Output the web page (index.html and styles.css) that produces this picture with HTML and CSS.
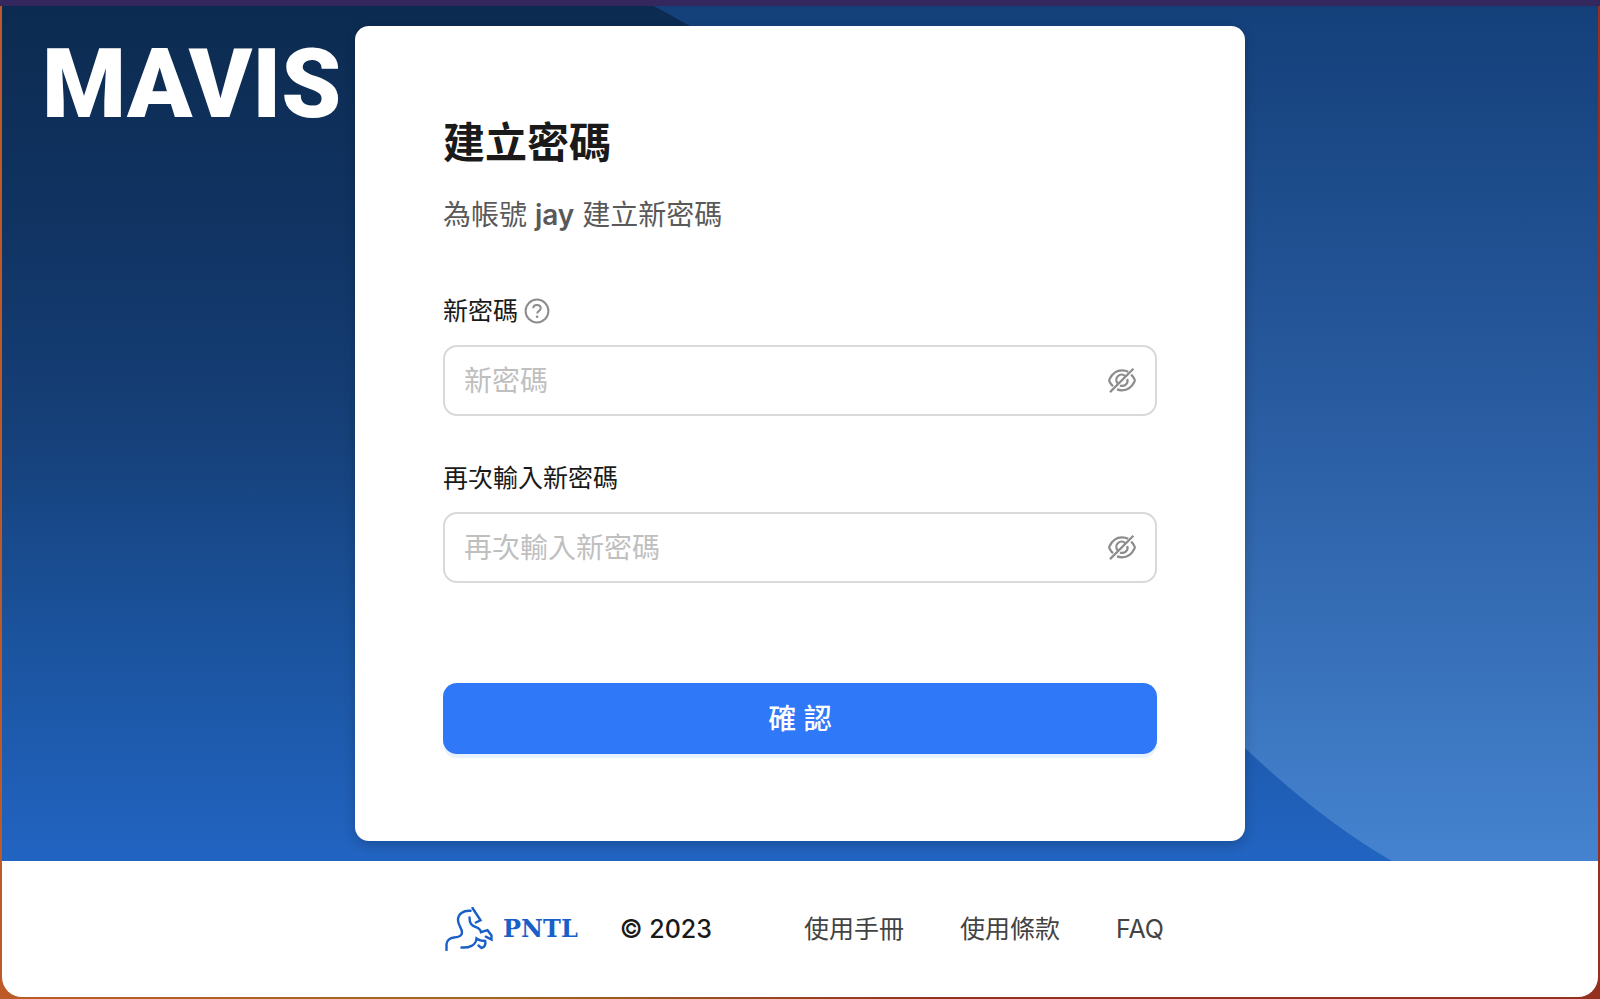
FILE: index.html
```html
<!DOCTYPE html>
<html lang="zh-Hant">
<head>
  <meta charset="UTF-8">
  <meta name="viewport" content="width=device-width, initial-scale=1.0">
  <title>建立密碼</title>
  <link rel="stylesheet" href="styles.css">
</head>
<body>
  <div class="window">
    <main class="hero">
      <svg class="hero-shape" viewBox="0 0 1596 855" preserveAspectRatio="none" aria-hidden="true">
        <defs>
          <linearGradient id="shape-fill" x1="0" y1="0" x2="0" y2="1">
            <stop offset="0" stop-color="#14407a"/>
            <stop offset="0.45" stop-color="#285a9f"/>
            <stop offset="0.8" stop-color="#3a74bd"/>
            <stop offset="1" stop-color="#4583d0"/>
          </linearGradient>
        </defs>
        <path fill="url(#shape-fill)" d="M652 0 L688 20 C960 170 960 470 1243 742 Q1320 815 1390 855 H1596 V0 Z"/>
      </svg>

      <a class="logo" href="#">MAVIS</a>

      <form class="card">
        <h1 class="title">建立密碼</h1>
        <p class="subtitle">為帳號 <strong>jay</strong> 建立新密碼</p>

        <div class="field">
          <div class="label-row">
            <label for="password">新密碼</label>
            <svg class="help" viewBox="0 0 26 26" aria-hidden="true">
              <circle cx="13" cy="13" r="11.4"/>
              <path d="M9.3 10.3c0-2 1.6-3.3 3.7-3.3s3.7 1.3 3.7 3.2c0 2.7-3.5 2.7-3.5 5.4"/>
              <circle class="dot" cx="13.1" cy="18.8" r="1.3"/>
            </svg>
          </div>
          <div class="input-box">
            <input type="password" id="password" placeholder="新密碼">
            <button type="button" class="toggle" aria-label="顯示密碼">
              <svg viewBox="0 0 28 28" aria-hidden="true">
                <path d="M20.200 4.800C18.300 3.800 16.300 3.400 14 3.400C8.500 3.400 4 7 1.500 12.300a2.400 2.400 0 0 0 0 2.200c.9 1.900 2.100 3.500 3.500 4.800M9 22.400C10.600 23 12.200 23.300 14 23.300c5.500 0 10-3.500 12.500-8.800a2.400 2.400 0 0 0 0-2.200c-.9-1.900-2-3.400-3.300-4.700"/>
                <path d="M17.200 9A5.300 5.300 0 0 0 9.400 16.100M12 18.400A5.300 5.300 0 0 0 19.300 12M2 25.100L25.400 1.700"/>
              </svg>
            </button>
          </div>
        </div>

        <div class="field">
          <div class="label-row">
            <label for="confirm">再次輸入新密碼</label>
          </div>
          <div class="input-box">
            <input type="password" id="confirm" placeholder="再次輸入新密碼">
            <button type="button" class="toggle" aria-label="顯示密碼">
              <svg viewBox="0 0 28 28" aria-hidden="true">
                <path d="M20.200 4.800C18.300 3.800 16.300 3.400 14 3.400C8.500 3.400 4 7 1.500 12.300a2.400 2.400 0 0 0 0 2.200c.9 1.900 2.100 3.500 3.500 4.800M9 22.400C10.600 23 12.200 23.300 14 23.300c5.500 0 10-3.500 12.500-8.800a2.400 2.400 0 0 0 0-2.200c-.9-1.900-2-3.400-3.300-4.700"/>
                <path d="M17.200 9A5.300 5.300 0 0 0 9.400 16.100M12 18.400A5.300 5.300 0 0 0 19.300 12M2 25.100L25.400 1.700"/>
              </svg>
            </button>
          </div>
        </div>

        <button type="submit" class="submit">確 認</button>
      </form>
    </main>

    <footer class="footer">
      <div class="brand">
        <svg class="horse" viewBox="0 0 48 44" aria-hidden="true">
          <path d="M1.500 43V37.500C1.500 33.500 5 30.700 9 30.500C14 30.200 17 29 17 25.500C17 21 13 18.500 13 13C13 7 18 3.300 25.500 3.800"/>
          <path d="M27.500 1L35.500 13.300L30.800 15.500M24.500 10.500C24.500 16.500 26.500 18.500 31 20.200C33.500 21.100 35.500 22.500 36 25.200L42.500 23.200L46.500 28.500V32.500L40.800 29.700"/>
          <path d="M16.500 40.500C24 41 31 38.500 31.500 31.500C34 33.500 37 34 40.200 34C41 37.500 39.500 40.500 36.500 41L33.500 38.500"/>
        </svg>
        <span class="brand-name">PNTL</span>
      </div>
      <span class="copyright">© 2023</span>
      <nav class="links">
        <a href="#">使用手冊</a>
        <a href="#">使用條款</a>
        <a href="#">FAQ</a>
      </nav>
    </footer>
  </div>
</body>
</html>
```
FILE: styles.css
```css
* {
  box-sizing: border-box;
}
body {
  margin: 0;
  min-height: 100vh;
  display: flex;
  padding: 0 2px 2px;
  border-top: 6px solid #33275e;
  background: linear-gradient(90deg, #bd5a28, #a06a20 30%, #93301f 60%, #93301f);
  font-family: Inter, "Noto Sans CJK TC", sans-serif;
  color: #1a1a1a;
}
.window {
  flex: 1;
  display: flex;
  flex-direction: column;
  background: #fff;
  border-radius: 0 0 20px 20px;
  overflow: hidden;
}
.hero {
  position: relative;
  display: grid;
  grid-template-columns: 1fr 890px 1fr;
  padding: 20px 0;
  background: linear-gradient(#0c2b50, #103362 25%, #164079 50%, #1b549f 75%, #2264c2);
}
.hero-shape {
  position: absolute;
  inset: 0;
  width: 100%;
  height: 100%;
}
.logo {
  position: relative;
  justify-self: start;
  align-self: start;
  margin-left: 40px;
  padding-top: 10px;
  font-family: Roboto, sans-serif;
  font-weight: 900;
  font-size: 96px;
  line-height: 96px;
  color: #fff;
  text-decoration: none;
}
.card {
  position: relative;
  padding: 89px 88px 87px;
  background: #fff;
  border-radius: 14px;
  box-shadow: 0 4px 12px rgba(0, 0, 0, 0.2);
}
.title {
  margin: 0 0 24px;
  font-size: 42px;
  line-height: 56px;
  font-weight: 700;
}
.subtitle {
  margin: 0 0 56px;
  font-size: 28px;
  line-height: 40px;
  color: #595959;
}
.subtitle strong {
  font-weight: 600;
}
.field {
  margin-bottom: 42px;
}
.label-row {
  display: flex;
  align-items: center;
  gap: 6px;
  margin-bottom: 14px;
  font-size: 25px;
  line-height: 40px;
}
.help {
  width: 26px;
  height: 26px;
  fill: none;
  stroke: #8c8c8c;
  stroke-width: 2;
}
.help .dot {
  fill: #8c8c8c;
  stroke: none;
}
.input-box {
  display: flex;
  align-items: center;
  height: 71px;
  padding: 0 19px;
  border: 2px solid #d9d9d9;
  border-radius: 14px;
}
.input-box input {
  flex: 1;
  min-width: 0;
  padding: 0;
  border: 0;
  outline: 0;
  background: none;
  font: inherit;
  font-size: 28px;
}
.input-box input::placeholder {
  color: #bfbfbf;
}
.toggle {
  display: flex;
  padding: 0;
  border: 0;
  background: none;
  cursor: pointer;
}
.toggle svg {
  width: 28px;
  height: 28px;
  fill: none;
  stroke: #8c8c8c;
  stroke-width: 2.2;
}
.submit {
  display: block;
  width: 100%;
  height: 71px;
  margin-top: 100px;
  padding: 0 0 4px;
  border: 0;
  border-radius: 14px;
  background: #2f78f8;
  box-shadow: 0 4px 0 #e8f2ff;
  color: #fff;
  font-family: inherit;
  font-size: 28px;
  font-weight: 500;
  cursor: pointer;
}
.footer {
  flex: 1;
  display: flex;
  align-items: center;
  justify-content: center;
  padding-left: 9px;
  font-size: 25px;
  line-height: 40px;
}
.brand {
  display: flex;
  align-items: center;
  gap: 10px;
  color: #1a5fc8;
}
.horse {
  width: 48px;
  height: 44px;
  fill: none;
  stroke: currentColor;
  stroke-width: 2.4;
  stroke-linecap: round;
}
.brand-name {
  font-family: "DejaVu Serif", serif;
  font-size: 24px;
  font-weight: 700;
}
.copyright {
  margin-left: 42px;
  font-weight: 500;
}
.links {
  display: flex;
  align-items: baseline;
  gap: 56px;
  margin-left: 92px;
}
.links a {
  color: #434343;
  text-decoration: none;
}
```
